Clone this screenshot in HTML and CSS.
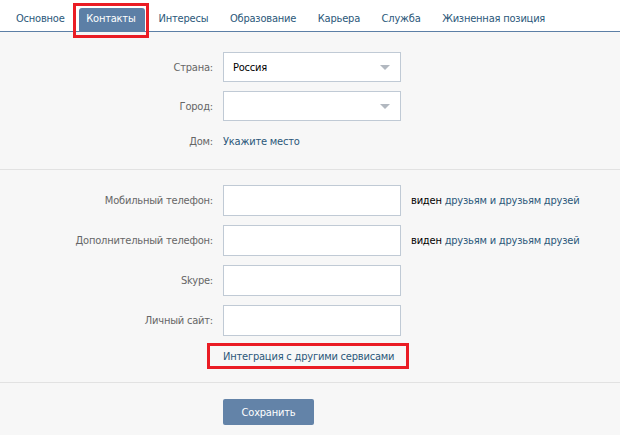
FILE: index.html
```html
<!DOCTYPE html>
<html lang="ru">
<head>
  <meta charset="UTF-8" />
  <title>Редактирование страницы</title>
  <link rel="stylesheet" href="styles.css">
</head>
<body>
  <div class="tabs">
    <a class="tab">Основное</a>
    <a class="tab tab-active marked">Контакты</a>
    <a class="tab">Интересы</a>
    <a class="tab">Образование</a>
    <a class="tab">Карьера</a>
    <a class="tab">Служба</a>
    <a class="tab">Жизненная позиция</a>
  </div>

  <div class="section section-place">
    <div class="form-row">
      <div class="form-label">Страна:</div>
      <div class="select">
        <span>Россия</span>
        <span class="select-arrow"></span>
      </div>
    </div>
    <div class="form-row">
      <div class="form-label">Город:</div>
      <div class="select">
        <span></span>
        <span class="select-arrow"></span>
      </div>
    </div>
    <div class="form-row form-row-text">
      <div class="form-label">Дом:</div>
      <a class="link">Укажите место</a>
    </div>
  </div>

  <div class="section section-contacts">
    <div class="form-row">
      <div class="form-label">Мобильный телефон:</div>
      <input type="text" class="text-input" />
      <div class="privacy"><b>виден</b> <a class="link">друзьям и друзьям друзей</a></div>
    </div>
    <div class="form-row">
      <div class="form-label">Дополнительный телефон:</div>
      <input type="text" class="text-input" />
      <div class="privacy"><b>виден</b> <a class="link">друзьям и друзьям друзей</a></div>
    </div>
    <div class="form-row">
      <div class="form-label">Skype:</div>
      <input type="text" class="text-input" />
    </div>
    <div class="form-row">
      <div class="form-label">Личный сайт:</div>
      <input type="text" class="text-input" />
    </div>
    <div class="form-row form-row-text">
      <div class="form-label"></div>
      <a class="link integration marked">Интеграция с другими сервисами</a>
    </div>
  </div>

  <div class="section section-save">
    <div class="form-row">
      <div class="form-label"></div>
      <button class="save-button">Сохранить</button>
    </div>
  </div>
</body>
</html>
```

FILE: styles.css
```css
body {
  margin: 0;
  padding: 0;
  background-color: #f7f7f7;
  font-family: 'DejaVu Sans Condensed', 'DejaVu Sans', sans-serif;
  font-size: 11px;
  letter-spacing: -0.2px;
  color: #000;
  width: 620px;
  height: 435px;
  overflow: hidden;
}

.tabs {
  background-color: #ffffff;
  height: 32px;
  border-bottom: 1px solid #5c7fa6;
  display: flex;
  align-items: flex-end;
  padding-left: 9px;
  box-sizing: border-box;
}

.tab {
  height: 23px;
  line-height: 22px;
  padding: 0 7px;
  margin-right: 7.6px;
  color: #2b587a;
  border-radius: 3px 3px 0 0;
  position: relative;
}

.tab-active {
  background-color: #5c7fa6;
  color: #ffffff;
  padding-right: 9px;
  margin-right: 7px;
}

.marked::after {
  content: '';
  position: absolute;
  left: -6px;
  right: -4px;
  top: -5px;
  bottom: -7px;
  border: 3px solid #ea1c24;
}

.section {
  border-bottom: 1px solid #e2e2e2;
}

.section-place {
  padding: 20px 0 8px;
}

.section-contacts {
  padding: 15px 0 15px;
}

.section-save {
  border-bottom: none;
  padding-top: 14px;
}

.form-row {
  display: flex;
  align-items: center;
  min-height: 30px;
  margin-bottom: 9px;
}

.section-contacts .form-row {
  min-height: 31px;
}

.section .form-row:last-child {
  margin-bottom: 0;
}

.section-place .form-row:last-child {
  margin-bottom: 9px;
}

.section .form-row-text {
  min-height: 22px;
}

.form-label {
  width: 223px;
  text-align: right;
  color: #666666;
  padding-right: 10px;
  box-sizing: border-box;
  flex-shrink: 0;
}

.select {
  width: 178px;
  height: 30px;
  box-sizing: border-box;
  background-color: #ffffff;
  border: 1px solid #c0cad5;
  display: flex;
  align-items: center;
  justify-content: space-between;
  padding: 0 10px 0 9px;
  color: #000;
}

.select-arrow {
  width: 0;
  height: 0;
  border-left: 5px solid transparent;
  border-right: 5px solid transparent;
  border-top: 5px solid #b2b8c0;
}

.text-input {
  width: 178px;
  height: 31px;
  box-sizing: border-box;
  background-color: #ffffff;
  border: 1px solid #c0cad5;
  margin: 0;
  padding: 0 6px;
  font-family: inherit;
  font-size: 11px;
}

.link {
  color: #2b587a;
  cursor: pointer;
}

.privacy {
  margin-left: 10px;
}

.privacy b {
  font-weight: normal;
  color: #000;
}

.integration {
  position: relative;
  display: inline-block;
  line-height: 13px;
}

.integration.marked::after {
  left: -16px;
  right: -15px;
  top: -7px;
  bottom: -6px;
}

.save-button {
  width: 91px;
  height: 26px;
  background-color: #6383a8;
  border: none;
  border-radius: 2px;
  color: #ffffff;
  font-family: inherit;
  font-size: 11px;
  letter-spacing: -0.2px;
  cursor: pointer;
}
```
